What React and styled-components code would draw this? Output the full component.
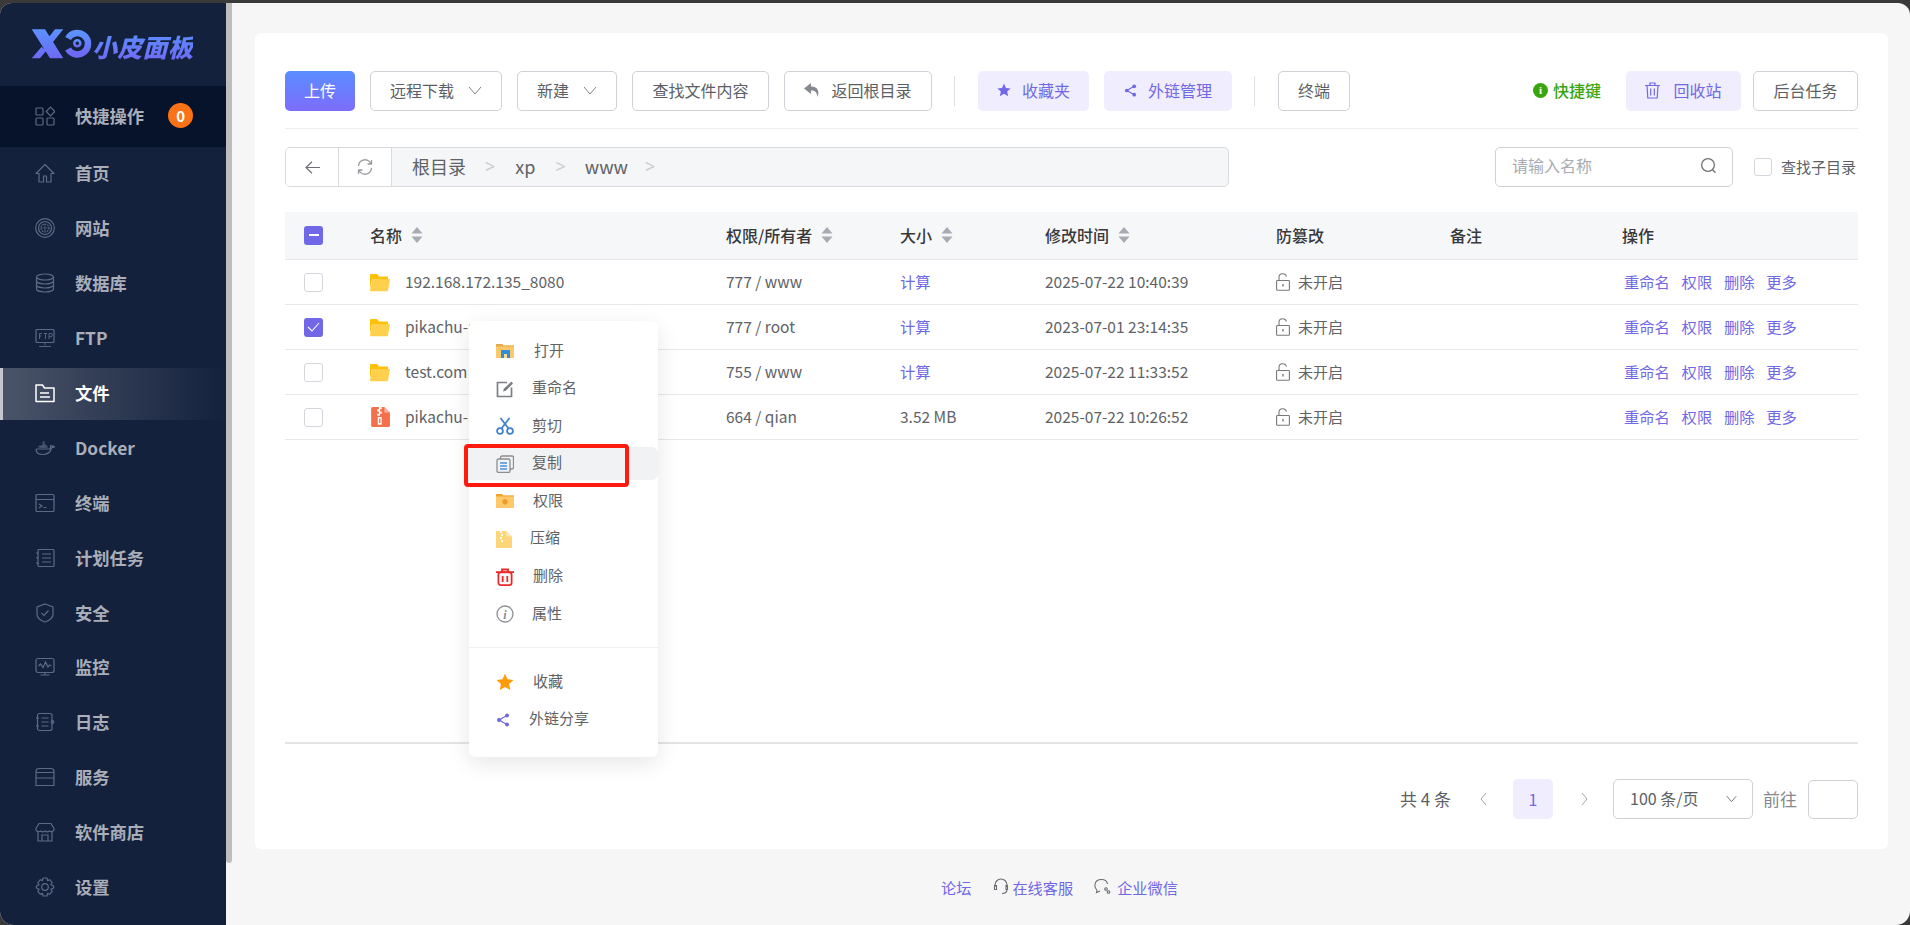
import React from 'react';
import styled, { createGlobalStyle } from 'styled-components';

const Global = createGlobalStyle`
  html, body { margin: 0; padding: 0; background: #3a3a3a; overflow: hidden; }
  * { box-sizing: border-box; }
  body { font-family: "Noto Sans CJK SC", "Noto Sans", sans-serif; }
`;

const Page = styled.div`
  position: relative; width: 1910px; height: 925px; padding-top: 3px; background: #3a3a3a;
`;
const Shell = styled.div`
  display: flex; height: 922px; overflow: hidden; border-radius: 12px 12px 14px 14px; background: #f6f6f6;
`;
const Sidebar = styled.aside`
  width: 226px; flex: none; background: #14213d; display: flex; flex-direction: column;
`;
const LogoRow = styled.div`
  height: 83px; display: flex; align-items: flex-start; padding: 26px 0 0 31px;
`;
const LogoText = styled.span`
  margin-left: 0; margin-top: 2px; font-size: 25px; line-height: 30px; font-weight: 900; font-style: italic; letter-spacing: 0.3px;
  background: linear-gradient(180deg, #5b8fff, #6f6af6); -webkit-background-clip: text; background-clip: text; color: transparent;
`;
const QuickBar = styled.div`
  height: 61px; display: flex; align-items: center; padding: 0 0 2px 35px; background: #07122b;
`;
const NavItem = styled.div`
  height: 54.9px; display: flex; align-items: center; padding: 0 0 2px 35px;
  ${p => p.$active && `
    margin: 1px 0; height: 52.9px; border-left: 3px solid #c4c7cd; padding-left: 32px;
    background: linear-gradient(90deg, #4a5469, #14213d);
  `}
`;
const NavIcon = styled.svg`
  width: 20px; height: 20px; flex: none; fill: none; stroke: ${p => p.$active ? '#fff' : '#5f6a80'}; stroke-width: 1.2;
`;
const NavLabel = styled.span`
  margin-left: 20px; font-size: 17.3px; font-weight: 700; line-height: 24px;
  color: ${p => p.$active ? '#ffffff' : '#a9aeb9'};
`;
const Badge = styled.span`
  width: 25px; height: 25px; margin-left: 24px; border-radius: 50%; background: #fb7316; color: #fff;
  display: flex; align-items: center; justify-content: center; font-size: 15px; font-weight: 700;
`;
const ScrollTrack = styled.div`
  width: 6px; flex: none; height: 860px; background: #bdbdbd; border-radius: 0 0 3px 3px;
`;
const Main = styled.main`
  flex: 1; min-width: 0; display: flex; flex-direction: column; padding: 30px 22px 0 23px;
`;
const Card = styled.section`
  height: 816px; flex: none; background: #fff; border-radius: 6px; padding: 38px 30px 0; display: flex; flex-direction: column;
`;
const Toolbar = styled.div`
  display: flex; align-items: center; height: 58px; padding-bottom: 17px; border-bottom: 1.5px solid #eeeef0; flex: none;
`;
const Btn = styled.button`
  height: 40px; width: ${p => p.$w}px; margin-left: ${p => p.$ml ?? 15}px; flex: none; padding: 0 0 2px; display: flex; align-items: center; justify-content: center; gap: ${p => p.$gap ?? 0}px;
  border-radius: 5px; font: 400 16px/1 "Noto Sans CJK SC", sans-serif; cursor: pointer;
  color: ${p => p.$kind === 'soft' ? '#7068e6' : p.$kind === 'primary' ? '#fff' : '#5c5f66'};
  background: ${p => p.$kind === 'soft' ? '#f0eefe' : p.$kind === 'primary' ? 'linear-gradient(180deg,#5a8dff,#7d6cfb)' : '#fff'};
  border: ${p => p.$kind ? 'none' : '1px solid #cfd1d6'};
`;
const Sep = styled.i`
  width: 1px; height: 30px; background: #dedfe3; flex: none; margin-left: ${p => p.$ml}px;
`;
const Hotkey = styled.span`
  margin-left: auto; display: flex; align-items: center; gap: 5px; color: #3aa50f; font-size: 16px; font-weight: 500; padding-bottom: 2px;
`;
const HotDot = styled.b`
  width: 15px; height: 15px; border-radius: 50%; background: #3aa50f; color: #fff; font: 700 11px/15px "Liberation Serif", serif; text-align: center;
`;
const PathRow = styled.div`
  display: flex; align-items: center; margin-top: 18px; height: 40px; flex: none;
`;
const Crumbs = styled.div`
  width: 944px; height: 40px; display: flex; border: 1px solid #d8dade; border-radius: 5px; background: #f5f6f7; overflow: hidden; flex: none;
`;
const CrumbBtn = styled.div`
  width: 53px; flex: none; background: #fff; border-right: 1px solid #d8dade; display: flex; align-items: center; justify-content: center; color: #777;
`;
const CrumbText = styled.span`
  font-size: 18px; color: #606266; line-height: 36px; margin-left: ${p => p.$ml}px;
`;
const CrumbArrow = styled.span`
  font: 400 18px/36px "Noto Sans", sans-serif; color: #c8cacf; margin-left: ${p => p.$ml}px;
`;
const Search = styled.div`
  width: 238px; height: 40px; margin-left: auto; border: 1px solid #cfd1d6; border-radius: 5px; display: flex; align-items: center; justify-content: space-between; padding: 0 15px 4px 16px;
  color: #a8abb2; font-size: 16px;
`;
const CheckLabel = styled.label`
  display: flex; align-items: center; margin-left: 21px; padding-right: 2px; gap: 9px; font-size: 15px; color: #5c5f66;
`;
const CheckText = styled.span`
  padding-bottom: 2px;
`;
const Check = styled.span`
  width: ${p => p.$s ?? 19}px; height: ${p => p.$s ?? 19}px; border-radius: 3px; flex: none; display: flex; align-items: center; justify-content: center;
  border: ${p => p.$on ? 'none' : '1px solid #d5d6de'}; background: ${p => p.$on ? '#7068e6' : '#fff'};
`;
const TableWrap = styled.div`
  margin-top: 25px; height: 532px; flex: none; border-bottom: 2px solid #e4e4e4;
`;
const columns = '85px 356px 174px 145px 231px 174px 172px 236px';
const HeadRow = styled.div`
  display: grid; grid-template-columns: ${columns}; height: 48px; align-items: center; background: #f6f7f9; border-bottom: 1.5px solid #e8e8ea; color: #36383c; font-size: 16px; font-weight: 500;
`;
const HeadCell = styled.div`
  display: flex; align-items: center; gap: 9px; padding-bottom: 2px;
  &:first-child { padding: 0 0 0 19px; }
`;
const Row = styled.div`
  display: grid; grid-template-columns: ${columns}; height: 45px; align-items: center; border-bottom: 1.5px solid #e8e8ea; color: #606266; font-size: 15.5px;
`;
const Cell = styled.div`
  display: flex; align-items: center; gap: ${p => p.$gap ?? 0}px; white-space: nowrap; min-width: 0;
  padding-left: ${p => p.$pl ?? 0}px;
  &:first-child { padding-left: 19px; }
`;
const CellText = styled.span`
  padding-bottom: 2px; font-size: ${p => p.$fs ?? 15.5}px;
`;
const Link = styled.span`
  color: #7068e6; font-size: 15.3px; padding-bottom: 2px;
`;
const Pager = styled.div`
  display: flex; align-items: center; margin-top: 35px; height: 40px; justify-content: flex-end; color: #5c5f66; font-size: 16px; flex: none;
`;
const Total = styled.span`
  font-size: 17px; padding-bottom: 2px;
`;
const PagerArrow = styled.svg`
  width: 9px; height: 14px; flex: none; fill: none; stroke: #a2a4a9; margin-left: ${p => p.$ml ?? 0}px;
`;
const PageNo = styled.span`
  width: 40px; height: 40px; border-radius: 5px; background: #f0eefe; color: #7068e6; display: flex; align-items: center; justify-content: center; margin: 0 27px 0 25px;
`;
const Select = styled.div`
  width: 140px; height: 40px; margin-left: 24px; border: 1px solid #cfd1d6; border-radius: 5px; display: flex; align-items: center; justify-content: space-between; padding: 0 15px 2px 16px;
`;
const GoLabel = styled.span`
  margin-left: 10px; font-size: 17px; color: #85888e; padding-bottom: 2px;
`;
const GoInput = styled.span`
  width: 50px; height: 39px; margin-left: 11px; border: 1px solid #cfd1d6; border-radius: 5px;
`;
const Footer = styled.footer`
  display: flex; align-items: center; height: 75px; padding: 0 0 0 686px; font-size: 15.2px; color: #7068e6;
`;
const FootLink = styled.span`
  display: flex; align-items: center; gap: ${p => p.$gap ?? 3}px; margin-right: ${p => p.$mr ?? 0}px;
`;
const Menu = styled.div`
  position: absolute; left: 469px; top: 321px; width: 189px; height: 436px; background: #fff; border-radius: 6px;
  box-shadow: 0 6px 22px rgba(0,0,0,.10); padding-top: 13.5px;
`;
const MenuItem = styled.div`
  height: 33px; margin-bottom: 4.6px; display: flex; align-items: center; padding-left: 27px; color: #606266; font-size: 15px; border-radius: 0 6px 6px 0;
  background: ${p => p.$hover ? '#f1f2f4' : 'transparent'};
`;
const MenuIcon = styled.svg`
  width: 18px; height: 18px; flex: none;
`;
const MenuLabel = styled.span`
  margin-left: ${p => p.$ml}px; padding-bottom: 4px;
`;
const MenuRule = styled.div`
  height: 1px; background: #efeff1; margin: 16px 0 18px;
`;
const RedBox = styled.div`
  position: absolute; left: 464px; top: 444px; width: 165px; height: 43px; border: 4px solid #ff1a0f; border-radius: 4px;
`;

const navIcons = {
  quick: <><rect x="1" y="2" width="7" height="7" rx="1"/><path d="M15.500 1.200l4.300 4.300-4.300 4.300-4.300-4.300z"/><rect x="1" y="12" width="7" height="7" rx="1"/><rect x="12" y="12" width="7" height="7" rx="1"/></>,
  home: <path d="M10 1.500L1 10.500h3v8.500h4.500v-6h3v6H16v-8.500h3z" strokeLinejoin="round"/>,
  web: <><circle cx="10" cy="10" r="9.300"/><circle cx="10" cy="10" r="6.500"/><circle cx="10" cy="10" r="4" strokeDasharray="1.600 1"/><path d="M6 10h8M10 6v8" strokeDasharray="1.500 1"/></>,
  db: <><ellipse cx="10" cy="4" rx="8.500" ry="3"/><path d="M1.500 4v12c0 1.700 3.800 3 8.500 3s8.500-1.300 8.500-3V4M1.500 8c0 1.700 3.800 3 8.500 3s8.500-1.300 8.500-3M1.500 12c0 1.700 3.800 3 8.500 3s8.500-1.300 8.500-3"/></>,
  ftp: <><rect x="1" y="1.500" width="18" height="13" rx="1"/><path d="M10 14.500v3M4 18.500h12M4.500 11V5.500h2.500M4.500 8h2M9 5.500h3M10.500 5.500V11M14 11V5.500h1.800a1.500 1.500 0 010 3.200H14" strokeWidth=".9"/></>,
  file: <><path d="M1 2h6.500l2 3h9.500v13.500H1z" strokeWidth="1.500" strokeLinejoin="round"/><path d="M5 10h9M5 14h10" strokeWidth="1.500"/></>,
  docker: <><path d="M1 11h14c1 0 2-.8 2.300-1.800.8.300 1.700.1 2.200-.4-.6-.6-1.500-.7-2.200-.4 0 0-1-1.300-1.800-.6.300 1.600-.5 2.700-.5 2.700M1 11c0 3.500 2.500 5.500 6.500 5.500 4.500 0 7.500-2 8.800-5.500"/><path d="M4 10V8h2v2M6 10V8h2v2M8 10V8h2v2M10 10V8h2v2M8 8V6h2v2M8 6V4h2" strokeWidth=".8"/></>,
  term: <><rect x="1" y="1.500" width="18" height="17" rx="1"/><path d="M1 6.500h18M4 11l3 2-3 2M8.500 14.500h3"/></>,
  task: <><path d="M4 1.500h14a1 1 0 011 1v15a1 1 0 01-1 1H4a1 1 0 01-1-1v-15a1 1 0 011-1z"/><path d="M7 6h9M7 10h9M7 14h9M1 5h3M1 10h3M1 15h3"/></>,
  safe: <><path d="M10 1l8 3v7c0 4-3.500 6.500-8 8-4.500-1.500-8-4-8-8V4z"/><path d="M6.500 10l2.500 2.500 4.500-5"/></>,
  mon: <><rect x="1" y="1.500" width="18" height="14" rx="2"/><path d="M3.500 9l2-2 2.500 3.500L10.500 5l2.500 5 1.500-2 2 1M10 15.500v2M5.500 18h9"/></>,
  log: <><rect x="2.500" y="1.500" width="14.500" height="17" rx="2"/><path d="M6.500 6h7M6.500 10h7M6.500 14h7M1 6h3M1 14h3"/><circle cx="17.500" cy="10" r="1.300"/></>,
  svc: <><path d="M1 4.500Q1 1.500 4 1.500h12q3 0 3 3v14H1zM1 5.500h18M1 11h18"/></>,
  shop: <><path d="M4 1.500h12l3 5v1.500a3 3 0 01-4.500 1 3.500 3.500 0 01-4.500 0 3.500 3.500 0 01-4.500 0A3 3 0 011 8V6.500zM3 10v9h14v-9M7 19v-6h6v6"/></>,
  gear: <><path d="M8 1h4l.6 2.600 2-.9 2.600 3-1.300 2.100 2.700 1.200v2l-2.700 1.200 1.300 2.100-2.600 3-2-.9L12 19H8l-.6-2.600-2 .9-2.600-3 1.300-2.100L1.400 11V9l2.700-1.200-1.300-2.100 2.600-3 2 .9z" strokeLinejoin="round"/><circle cx="10" cy="10" r="3.300"/></>,
};

const navItems = [
  ['首页', 'home'], ['网站', 'web'], ['数据库', 'db'], ['FTP', 'ftp'], ['文件', 'file', true], ['Docker', 'docker'], ['终端', 'term'],
  ['计划任务', 'task'], ['安全', 'safe'], ['监控', 'mon'], ['日志', 'log'], ['服务', 'svc'], ['软件商店', 'shop'], ['设置', 'gear'],
];

const Chevron = ({ size = 14, color = '#7f8288' }) => (
  <svg width={size} height={size} viewBox="0 0 14 14" fill="none" stroke={color} strokeWidth="1"><path d="M1 4l6 7 6-7"/></svg>
);
const Carets = () => (
  <svg width="12" height="18" viewBox="0 0 12 18" fill="#a8abb2"><path d="M6 1l5.500 6.500H.500zM6 17l5.500-6.500H.500z"/></svg>
);
const Folder = () => (
  <svg width="20" height="19" viewBox="0 0 20 19"><path d="M0 2a1 1 0 011-1h6l2 2.500h9v3H2L0 16z" fill="#ffc107"/><path d="M2.500 6H20l-2 11.500a1 1 0 01-1 .8H1a1 1 0 01-1-1z" fill="#ffd04d"/></svg>
);
const Zip = () => (
  <svg width="20" height="21" viewBox="1 1 18 19" preserveAspectRatio="xMidYMid meet"><path d="M2 2a2 2 0 012-1h10l5 5v12a1 1 0 01-1 1H3a1 1 0 01-1-1z" fill="#f3704a"/><path d="M14 1l5 5h-5z" fill="#f9b49f"/><path d="M9 1h2.500v2H9zM7.500 3H10v2H7.500zM9 5h2.500v2H9zM7.500 7H10v2H7.500zM8 10h3.500v7H8z" fill="#fff"/><path d="M9.200 11.500h1.200V15.500H9.200z" fill="#f3704a"/></svg>
);
const Lock = () => (
  <svg width="14" height="18" viewBox="0 0 14 18" fill="none" stroke="#77797e" strokeWidth="1.100"><rect x=".6" y="7.500" width="12.800" height="9.800" rx=".8"/><path d="M3 7.500V4.200C3 2 4.700.7 6.600.7c1.900 0 3.500 1.200 3.800 3"/><path d="M7 11v2.500" strokeWidth="1.400"/></svg>
);
const Tick = () => (
  <svg width="13" height="10" viewBox="0 0 13 10" fill="none" stroke="#fff" strokeWidth="1.100"><path d="M1 5l4 4 7-8"/></svg>
);
const Star = ({ color, size = 14 }) => (
  <svg width={size} height={size} viewBox="0 0 24 24" fill={color}><path d="M12 1l3.400 7.400 8 .9-6 5.400 1.700 7.900L12 18.600l-7.100 4 1.700-7.900-6-5.400 8-.9z"/></svg>
);
const Share = ({ size = 14, color = '#7068e6' }) => (
  <svg width={size} height={size} viewBox="0 0 14 14" fill={color} stroke={color}><circle cx="11" cy="2.500" r="2" stroke="none"/><circle cx="3" cy="7" r="2" stroke="none"/><circle cx="11" cy="11.500" r="2" stroke="none"/><path d="M11 2.500L3 7l8 4.500" fill="none" strokeWidth="1.200"/></svg>
);

const rows = [
  { name: '192.168.172.135_8080', perm: '777 / www', time: '2025-07-22 10:40:39' },
  { name: 'pikachu-master', perm: '777 / root', time: '2023-07-01 23:14:35', on: true },
  { name: 'test.com', perm: '755 / www', time: '2025-07-22 11:33:52' },
  { name: 'pikachu-master.zip', perm: '664 / qian', time: '2025-07-22 10:26:52', size: '3.52 MB', zip: true },
];

const menuGroupA = [
  ['打开', 35, <><path d="M0 2h6l1.500 1.500H18V16H0z" fill="#ffc96b"/><path d="M0 2h6l1.500 1.500H18v1H0z" fill="#e8a94a"/><path d="M5 8h9v8H5z" fill="#2f8fd6"/><path d="M8 12h3v4H8z" fill="#ffd98f"/></>],
  ['重命名', 33, <g fill="none" stroke="#7d7f84" strokeWidth="1.700"><path d="M11 2.500H1.500v14h14V7.500"/><path d="M7 11.500l1-3L15.500 1.500 17 3.500 9.800 10.800z" fill="#7d7f84" stroke="none"/></g>],
  ['剪切', 33, <g fill="none" stroke="#3f83cc" strokeWidth="1.800"><circle cx="4" cy="14" r="2.900"/><circle cx="14" cy="14" r="2.900"/><path d="M5.500 11.500L13.500 1M12.500 11.500L4.500 1"/></g>],
  ['复制', 33, <g fill="none" stroke="#8b8d92" strokeWidth="1.300"><rect x="4.500" y="1" width="13" height="13" rx="1.500"/><rect x="1" y="4" width="13" height="13.500" rx="1.500" fill="#f1f2f4"/><path d="M4 8h7M4 11h7M4 14h7" stroke="#4d8fe0"/></g>],
  ['权限', 34, <><path d="M0 2h6l1.500 1.500H18V16H0z" fill="#ffc96b"/><path d="M0 2h6l1 1.500H18v1H0z" fill="#eea52f"/><path d="M6.500 8l2.500-1 2.500 1v3l-2.500 2-2.500-2z" fill="#ea9c24"/></>],
  ['压缩', 31, <><path d="M0 1h10l6 5.500V18H0z" fill="#ffd677"/><path d="M10 1l6 5.500h-6z" fill="#ffe7ac"/><path d="M4 1h2v2H4zM5 4h2v2H5zM4 7h2v2H4zM5 10h2v2H5z" fill="#fff"/></>],
  ['删除', 34, <g fill="none" stroke="#ea2a2a" strokeWidth="1.800"><path d="M0 4.200h18M6 4V1.500h6V4"/><rect x="2.400" y="4.400" width="13.200" height="12.700" rx="2.400"/><path d="M6.700 8v6M11.300 8v6"/></g>],
  ['属性', 33, <><circle cx="9" cy="9" r="8" fill="none" stroke="#8b8d92" strokeWidth="1.300"/><text x="9" y="13.500" textAnchor="middle" fontFamily="Liberation Serif, serif" fontStyle="italic" fontWeight="700" fontSize="12" fill="#8b8d92">i</text></>],
];

export default function App() {
  return (
    <Page>
      <Global />
      <Shell>
        <Sidebar>
          <LogoRow>
            <svg width="61" height="31" viewBox="0 0 61 31">
              <defs>
                <linearGradient id="lg" x1="0" y1="0" x2="0" y2="1"><stop offset="0" stopColor="#5b92ff"/><stop offset="1" stopColor="#6f68f5"/></linearGradient>
              </defs>
              <path fill="url(#lg)" d="M.7 .3H14L32.300 29.300H19zM24 .3h8.300L22 13l-4-5zM10.700 17.700L15 22l-6 7.300H.7z"/>
              <path fill="none" stroke="url(#lg)" strokeWidth="6.500" d="M37 9.500A10.700 10.700 0 1 1 37 20"/>
              <path fill="none" stroke="url(#lg)" strokeWidth="2.600" d="M37 14.300h9.300"/>
              <circle cx="46.300" cy="14.300" r="3" fill="none" stroke="url(#lg)" strokeWidth="2.600"/>
            </svg>
            <LogoText>小皮面板</LogoText>
          </LogoRow>
          <QuickBar>
            <NavIcon viewBox="0 0 20 20">{navIcons.quick}</NavIcon>
            <NavLabel>快捷操作</NavLabel>
            <Badge>0</Badge>
          </QuickBar>
          {navItems.map(([label, icon, active]) => (
            <NavItem key={label} $active={active}>
              <NavIcon viewBox="0 0 20 20" $active={active}>{navIcons[icon]}</NavIcon>
              <NavLabel $active={active}>{label}</NavLabel>
            </NavItem>
          ))}
        </Sidebar>
        <ScrollTrack />
        <Main>
          <Card>
            <Toolbar>
              <Btn $w={70} $ml={0} $kind="primary">上传</Btn>
              <Btn $w={132} $gap={14}>远程下载<Chevron /></Btn>
              <Btn $w={100} $gap={14}>新建<Chevron /></Btn>
              <Btn $w={137}>查找文件内容</Btn>
              <Btn $w={148} $gap={11}>
                <svg width="16" height="15" viewBox="0 0 16 15" fill="#85888e"><path d="M7 0L0 5.500 7 11V7.500c4 0 6 1.500 6.500 6.500 2-5 1-10.500-6.500-10.500z"/></svg>
                返回根目录
              </Btn>
              <Sep $ml={22} />
              <Btn $w={111} $ml={23} $kind="soft" $gap={11}><Star color="#7068e6" />收藏夹</Btn>
              <Btn $w={128} $kind="soft" $gap={11}><Share size={13} />外链管理</Btn>
              <Sep $ml={22} />
              <Btn $w={72} $ml={23}>终端</Btn>
              <Hotkey><HotDot>i</HotDot>快捷键</Hotkey>
              <Btn $w={115} $ml={25} $kind="soft" $gap={13}>
                <svg width="15" height="17" viewBox="0 0 15 17" fill="none" stroke="#7068e6" strokeWidth="1.200"><path d="M0 3.500h15M5 3.500V1h5v2.500M2 3.500l.8 12.500h9.400l.8-12.500M5.700 6.500v7M9.300 6.500v7"/></svg>
                回收站
              </Btn>
              <Btn $w={105} $ml={12}>后台任务</Btn>
            </Toolbar>
            <PathRow>
              <Crumbs>
                <CrumbBtn>
                  <svg width="15" height="13" viewBox="0 0 15 13" fill="none" stroke="#6e7075" strokeWidth="1.200"><path d="M7 .7L1 6.500l6 5.800M1 6.500h14"/></svg>
                </CrumbBtn>
                <CrumbBtn>
                  <svg width="16" height="16" viewBox="0 0 16 16" fill="none" stroke="#9a9ca1" strokeWidth="1.300"><path d="M1.500 7A6.500 6.500 0 0113 3.200L14.500 5M14.500 9A6.500 6.500 0 013 12.800L1.500 11M14.500 1v4h-4M1.500 15v-4h4"/></svg>
                </CrumbBtn>
                <CrumbText $ml={20}>根目录</CrumbText>
                <CrumbArrow $ml={19}>&gt;</CrumbArrow>
                <CrumbText $ml={20}>xp</CrumbText>
                <CrumbArrow $ml={20}>&gt;</CrumbArrow>
                <CrumbText $ml={19}>www</CrumbText>
                <CrumbArrow $ml={17}>&gt;</CrumbArrow>
              </Crumbs>
              <Search>
                请输入名称
                <svg width="17" height="17" viewBox="0 0 17 17" fill="none" stroke="#6e7075" strokeWidth="1.300"><circle cx="8" cy="8" r="6.400"/><path d="M12.500 12.800l3 3"/></svg>
              </Search>
              <CheckLabel><Check $s={18} /><CheckText>查找子目录</CheckText></CheckLabel>
            </PathRow>
            <TableWrap>
              <HeadRow>
                <HeadCell><Check $on><svg width="10" height="3"><rect width="10" height="2" fill="#fff"/></svg></Check></HeadCell>
                <HeadCell>名称<Carets /></HeadCell>
                <HeadCell>权限/所有者<Carets /></HeadCell>
                <HeadCell>大小<Carets /></HeadCell>
                <HeadCell>修改时间<Carets /></HeadCell>
                <HeadCell>防篡改</HeadCell>
                <HeadCell>备注</HeadCell>
                <HeadCell>操作</HeadCell>
              </HeadRow>
              {rows.map(r => (
                <Row key={r.name}>
                  <Cell><Check $on={r.on}>{r.on && <Tick />}</Check></Cell>
                  <Cell $gap={15}>{r.zip ? <Zip /> : <Folder />}<CellText>{r.name}</CellText></Cell>
                  <Cell><CellText>{r.perm}</CellText></Cell>
                  <Cell>{r.size ? <CellText>{r.size}</CellText> : <Link>计算</Link>}</Cell>
                  <Cell><CellText>{r.time}</CellText></Cell>
                  <Cell $gap={8}><Lock /><CellText $fs={15}>未开启</CellText></Cell>
                  <Cell />
                  <Cell $gap={11.700} $pl={2}><Link>重命名</Link><Link>权限</Link><Link>删除</Link><Link>更多</Link></Cell>
                </Row>
              ))}
            </TableWrap>
            <Pager>
              <Total>共 4 条</Total>
              <PagerArrow $ml={28} viewBox="0 0 9 14"><path d="M7 1L2 7l5 6"/></PagerArrow>
              <PageNo>1</PageNo>
              <PagerArrow viewBox="0 0 9 14"><path d="M2 1l5 6-5 6"/></PagerArrow>
              <Select>100 条/页<Chevron size={11} color="#55585e" /></Select>
              <GoLabel>前往</GoLabel>
              <GoInput />
            </Pager>
          </Card>
          <Footer>
            <FootLink $mr={22}>论坛</FootLink>
            <FootLink $mr={21}>
              <svg width="16" height="17" viewBox="0 0 16 17" fill="none" stroke="#6a6c72" strokeWidth="1.100"><path d="M2 9V7a6 6 0 0112 0v2M2 7.500h-.5v4H3.500v-4zM13 7.500h1.500v4H13zM14 11.500c0 3-2 4-5 4"/></svg>
              在线客服
            </FootLink>
            <FootLink $gap={6}>
              <svg width="17" height="17" viewBox="0 0 17 17" fill="none" stroke="#6a6c72" strokeWidth="1.100"><path d="M3 12C1 10.500.7 8.500 1 6.500 1.500 3 4.500 1.500 7.500 1.500s5.500 1.500 6 4.500M3 12l-.5 2.500L6 13"/><circle cx="12" cy="11" r="1.300"/><circle cx="14.500" cy="14" r="1.300"/></svg>
              企业微信
            </FootLink>
          </Footer>
        </Main>
      </Shell>
      <Menu>
        {menuGroupA.map(([label, ml, icon]) => (
          <MenuItem key={label} $hover={label === '复制'}>
            <MenuIcon viewBox="0 0 18 18">{icon}</MenuIcon>
            <MenuLabel $ml={ml - 18 + 3}>{label}</MenuLabel>
          </MenuItem>
        ))}
        <MenuRule />
        <MenuItem>
          <Star color="#ff9a0a" size={18} />
          <MenuLabel $ml={19}>收藏</MenuLabel>
        </MenuItem>
        <MenuItem>
          <Share size={14} />
          <MenuLabel $ml={19}>外链分享</MenuLabel>
        </MenuItem>
      </Menu>
      <RedBox />
    </Page>
  );
}
